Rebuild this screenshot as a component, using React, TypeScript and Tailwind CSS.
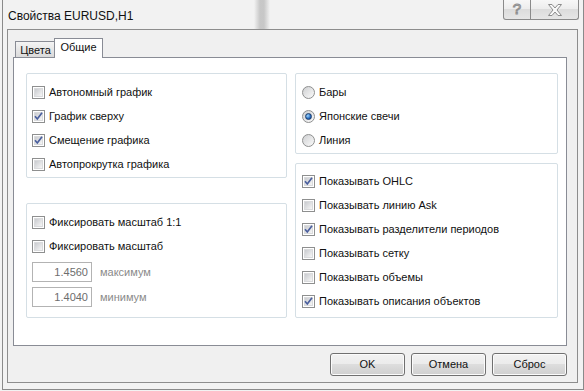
import React from "react";

const CheckBox = ({ checked }: { checked?: boolean }) => (
  <div className="relative w-[13px] h-[13px] shrink-0 border border-[#8e8f8f] bg-white p-px">
    <div className="w-full h-full border border-[#d9dadc] bg-gradient-to-br from-[#c9cbcf] to-[#f6f6f6]" />
    {checked && (
      <svg className="absolute inset-0" width="11" height="11" viewBox="0 0 11 11">
        <path d="M2 5.3 L4.3 8 L9 1.8" fill="none" stroke="#4a5f9e" strokeWidth="1.7" />
      </svg>
    )}
  </div>
);

const Radio = ({ checked }: { checked?: boolean }) => (
  <div className="w-[13px] h-[13px] shrink-0 rounded-full border border-[#8e8f8f] bg-gradient-to-br from-[#cfd0d2] to-[#fbfbfb] flex items-center justify-center">
    {checked && (
      <div className="w-[7px] h-[7px] rounded-full border border-[#1d3d6b] bg-[radial-gradient(circle_at_35%_35%,#9cd6ff,#2569bd_60%,#0c3a7a)]" />
    )}
  </div>
);

const CheckRow = ({ label, checked }: { label: string; checked?: boolean }) => (
  <div className="h-[24px] flex items-center gap-[4px]">
    <CheckBox checked={checked} />
    <span>{label}</span>
  </div>
);

const RadioRow = ({ label, checked }: { label: string; checked?: boolean }) => (
  <div className="h-[24px] flex items-center gap-[4px]">
    <Radio checked={checked} />
    <span>{label}</span>
  </div>
);

const Field = ({ value, label }: { value: string; label: string }) => (
  <div className="flex items-center gap-[8px]">
    <div className="w-[60px] h-[20px] border border-[#b3b3b3] bg-white text-right pr-[3px] leading-[18px] text-[#6d6d6d]">
      {value}
    </div>
    <span className="text-[#8a8a8a]">{label}</span>
  </div>
);

const Btn = ({ label }: { label: string }) => (
  <div className="w-[75px] h-[23px] rounded-[3px] border border-[#707070] bg-[linear-gradient(to_bottom,#f2f2f2_0%,#ebebeb_50%,#dddddd_50%,#cfcfcf_100%)] shadow-[inset_0_0_0_1px_#fbfbfb] flex items-center justify-center">
    {label}
  </div>
);

export default function App() {
  return (
    <div className="w-[584px] h-[391px] overflow-hidden bg-[#f2f2f2] font-['Liberation_Sans',Arial,sans-serif] text-[11px] text-[#111]">
      <div className="ml-[2px] w-[582px] h-[390px] border-l border-r border-b border-[#8a8a8a] flex flex-col">
        {/* title bar */}
        <div className="h-[29px] flex items-start justify-between bg-[linear-gradient(to_right,transparent_251px,rgba(120,120,120,0.35)_257px,rgba(120,120,120,0.35)_261px,transparent_267px)]">
          <span className="pl-[5px] mt-[9px] leading-[14px] text-[12px]">Свойства EURUSD,H1</span>
          <div className="mr-[4px] flex h-[20px] border border-t-0 border-[#8a8a8a] rounded-b-[3px] overflow-hidden bg-[linear-gradient(to_bottom,#f7f7f7_0%,#ececec_50%,#dcdcdc_50%,#e6e6e6_100%)]">
            <div className="w-[27px] flex items-center justify-center border-r border-[#8a8a8a] text-[15px] text-[#f6f6f6] [-webkit-text-stroke:1px_#8c8c8c]">
              ?
            </div>
            <div className="w-[47px] flex items-center justify-center">
              <svg width="16" height="12" viewBox="0 0 16 12">
                <path
                  d="M1.5 0.5 H5 L8 4 L11 0.5 H14.5 L10 6 L14.5 11.5 H11 L8 8 L5 11.5 H1.5 L6 6 Z"
                  fill="#f8f8f8"
                  stroke="#8c8c8c"
                  strokeWidth="1"
                />
              </svg>
            </div>
          </div>
        </div>

        {/* client area */}
        <div className="ml-[4px] w-[571px] h-[354px] border border-[#8d8d8d] bg-[#f0f0f0] pl-[5px] pt-[8px]">
          <div className="relative z-10 -mb-px flex items-end h-[20px] pl-[2px]">
            <div className="w-[41px] h-[17px] border border-[#898c95] bg-[linear-gradient(to_bottom,#f4f4f4,#dadada)] flex items-center justify-center pt-[2px]">
              Цвета
            </div>
            <div className="-ml-[2px] w-[49px] h-[20px] border border-b-0 border-[#898c95] bg-white flex items-center justify-center pb-[2px]">
              Общие
            </div>
          </div>

          <div className="w-[554px] h-[289px] border border-[#898c95] bg-white flex gap-[8px] pl-[12px] pt-[15px]">
            <div className="w-[261px] flex flex-col gap-[25px]">
              <div className="h-[105px] border border-[#d5dfe5] rounded-[2px] pl-[5px] pt-[6px]">
                <CheckRow label="Автономный график" />
                <CheckRow label="График сверху" checked />
                <CheckRow label="Смещение графика" checked />
                <CheckRow label="Автопрокрутка графика" />
              </div>
              <div className="h-[115px] border border-[#d5dfe5] rounded-[2px] pl-[5px] pt-[6px]">
                <CheckRow label="Фиксировать масштаб 1:1" />
                <CheckRow label="Фиксировать масштаб" />
                <div className="mt-[4px] flex flex-col gap-[5px]">
                  <Field value="1.4560" label="максимум" />
                  <Field value="1.4040" label="минимум" />
                </div>
              </div>
            </div>

            <div className="w-[263px] flex flex-col gap-[9px]">
              <div className="h-[81px] border border-[#d5dfe5] rounded-[2px] pl-[6px] pt-[6px]">
                <RadioRow label="Бары" />
                <RadioRow label="Японские свечи" checked />
                <RadioRow label="Линия" />
              </div>
              <div className="h-[155px] border border-[#d5dfe5] rounded-[2px] pl-[6px] pt-[5px]">
                <CheckRow label="Показывать OHLC" checked />
                <CheckRow label="Показывать линию Ask" />
                <CheckRow label="Показывать разделители периодов" checked />
                <CheckRow label="Показывать сетку" />
                <CheckRow label="Показывать объемы" />
                <CheckRow label="Показывать описания объектов" checked />
              </div>
            </div>
          </div>

          <div className="w-[554px] mt-[7px] flex justify-end gap-[6px]">
            <Btn label="OK" />
            <Btn label="Отмена" />
            <Btn label="Сброс" />
          </div>
        </div>
      </div>
    </div>
  );
}
